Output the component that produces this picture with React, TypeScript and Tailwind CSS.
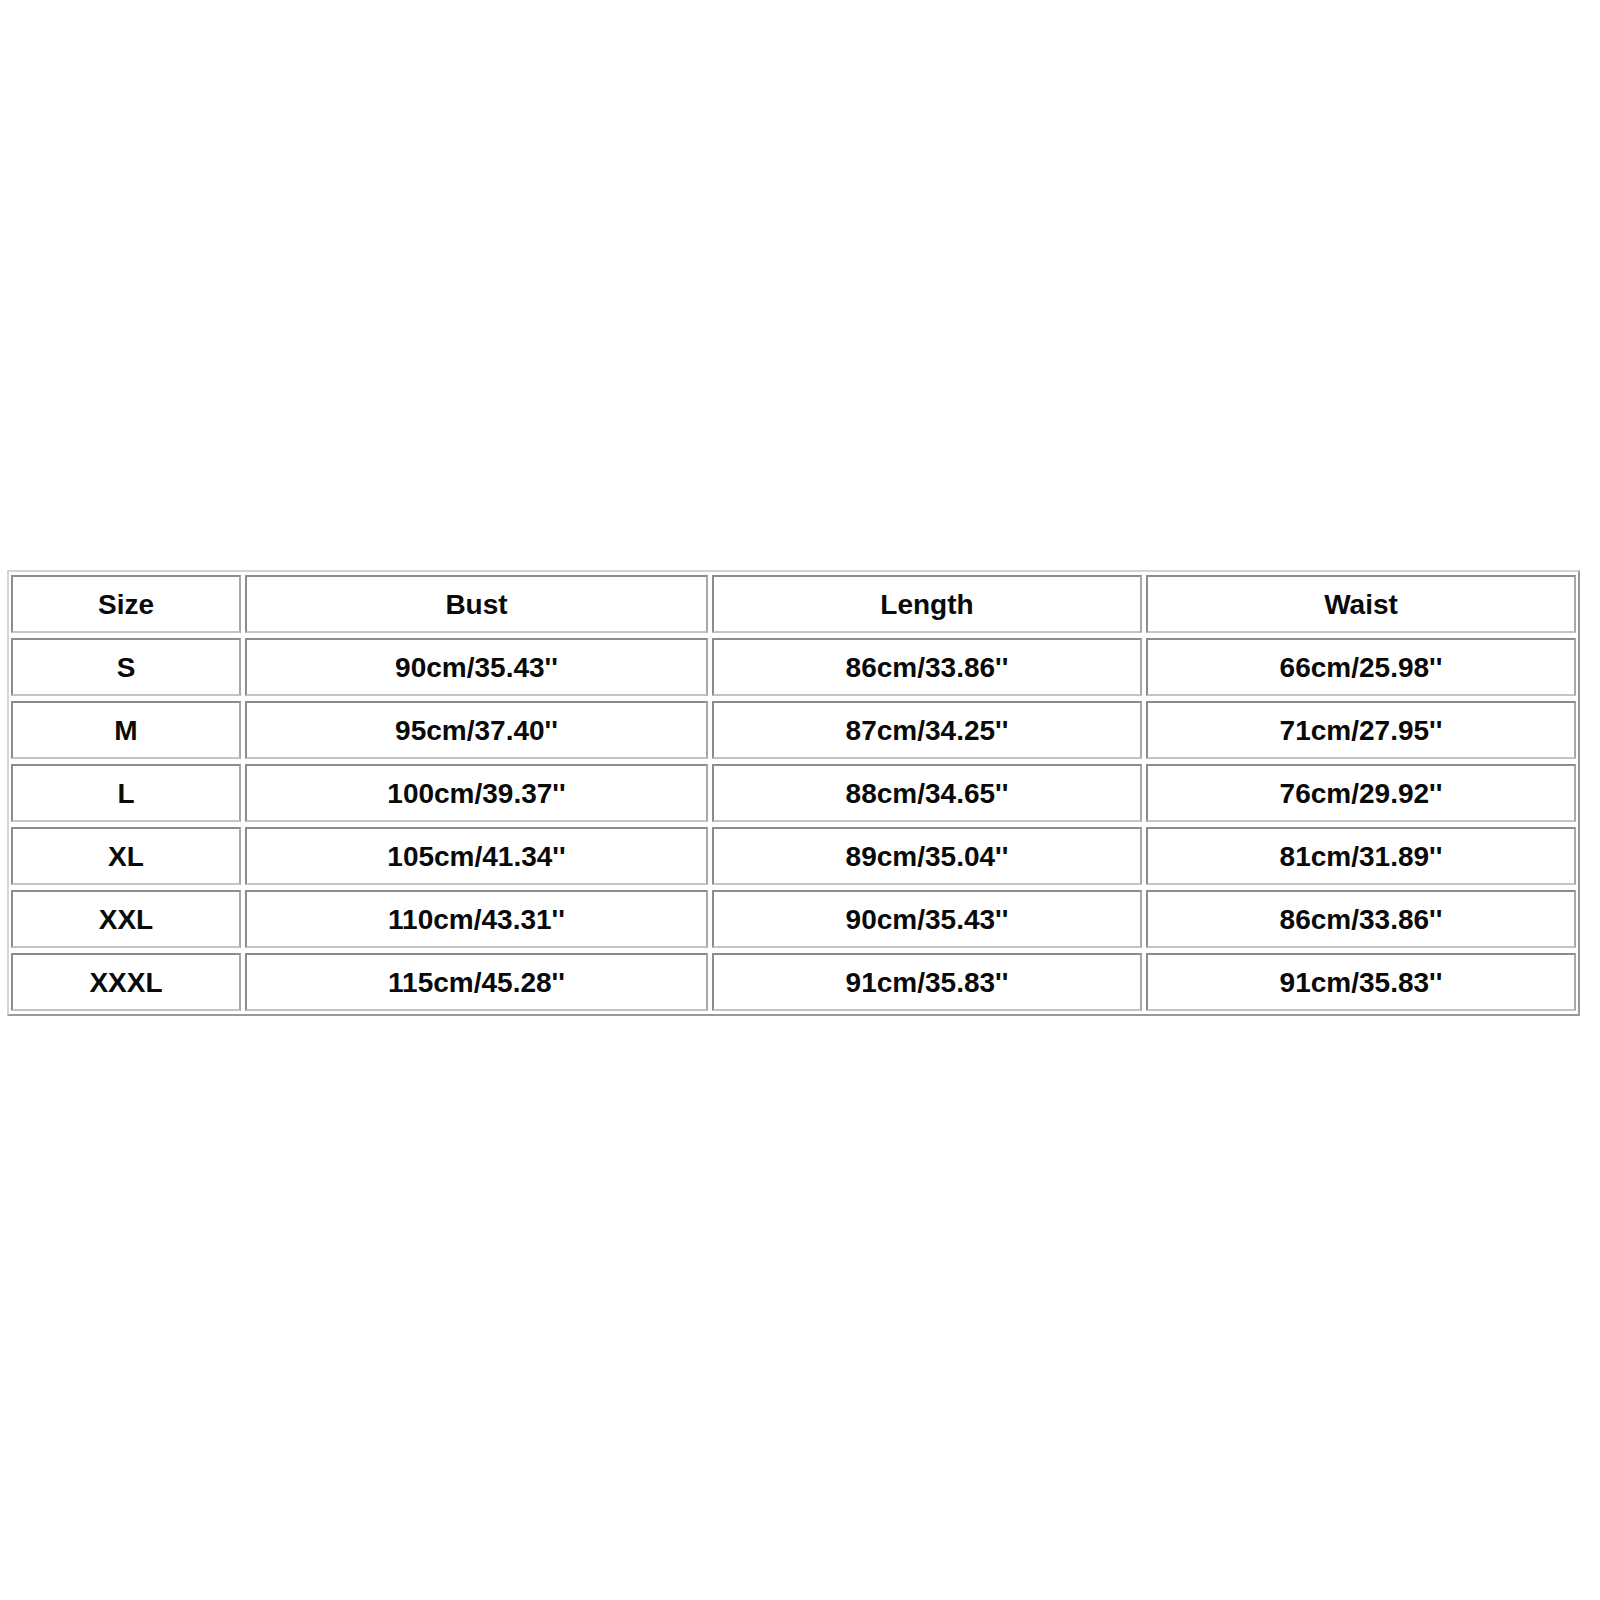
import React from "react";

const rows: string[][] = [
  ["Size", "Bust", "Length", "Waist"],
  ["S", "90cm/35.43''", "86cm/33.86''", "66cm/25.98''"],
  ["M", "95cm/37.40''", "87cm/34.25''", "71cm/27.95''"],
  ["L", "100cm/39.37''", "88cm/34.65''", "76cm/29.92''"],
  ["XL", "105cm/41.34''", "89cm/35.04''", "81cm/31.89''"],
  ["XXL", "110cm/43.31''", "90cm/35.43''", "86cm/33.86''"],
  ["XXXL", "115cm/45.28''", "91cm/35.83''", "91cm/35.83''"],
];

const widths = ["w-[230px]", "w-[463px]", "w-[430px]", "w-[430px]"];

export default function App() {
  return (
    <div className="w-[1600px] h-[1600px] bg-white pt-[570px] pl-[7px]" style={{ fontFamily: '"Liberation Sans", Arial, sans-serif' }}>
      <div className="inline-flex flex-col gap-y-[5px] pt-[3px] pb-[3px] px-[2px] border-2 border-t-[#d4d4d4] border-l-[#d4d4d4] border-b-[#9a9a9a] border-r-[#9a9a9a]">
        {rows.map((r, i) => (
          <div key={i} className="flex gap-[4px]">
            {r.map((c, j) => (
              <div
                key={j}
                className={`${widths[j]} h-[58px] pt-[2px] flex items-center justify-center border-2 border-t-[#8c8c8c] border-l-[#8c8c8c] border-b-[#c4c4c4] border-r-[#a8a8a8] text-[28px] font-bold text-[#0a0a0a]`}
              >
                {c}
              </div>
            ))}
          </div>
        ))}
      </div>
    </div>
  );
}
